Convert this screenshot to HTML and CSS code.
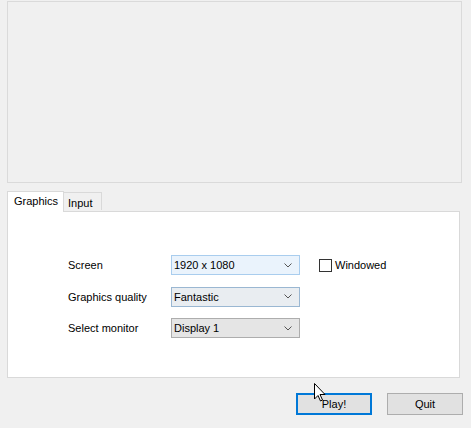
FILE: index.html
```html
<!DOCTYPE html>
<html>
<head>
<meta charset="utf-8">
<link rel="stylesheet" href="styles.css">
</head>
<body>
<div class="app">
  <div class="banner"></div>
  <div class="tabs">
    <div class="tab active">Graphics</div>
    <div class="tab">Input</div>
  </div>
  <div class="panel">
    <div class="form">
      <div class="label">Screen</div>
      <div class="select hover"><span>1920 x 1080</span><svg class="chev" width="8" height="5" viewBox="0 0 8 5"><path d="M0.5 0.5 L4 4 L7.5 0.5" fill="none" stroke="#555" stroke-width="1"/></svg></div>
      <label class="check"><span class="box"></span><span>Windowed</span></label>

      <div class="label">Graphics quality</div>
      <div class="select focus"><span>Fantastic</span><svg class="chev" width="8" height="5" viewBox="0 0 8 5"><path d="M0.5 0.5 L4 4 L7.5 0.5" fill="none" stroke="#555" stroke-width="1"/></svg></div>
      <div></div>

      <div class="label">Select monitor</div>
      <div class="select"><span>Display 1</span><svg class="chev" width="8" height="5" viewBox="0 0 8 5"><path d="M0.5 0.5 L4 4 L7.5 0.5" fill="none" stroke="#555" stroke-width="1"/></svg></div>
      <div></div>
    </div>
  </div>
  <div class="buttons">
    <button class="btn primary">Play!</button>
    <button class="btn">Quit</button>
  </div>
</div>
<svg class="cursor" width="12" height="19" viewBox="0 0 12 19"><path d="M0.5 0.5 L0.5 16 L4 12.5 L6.5 18 L8.5 17 L6 11.5 L11 11.5 Z" fill="#fff" stroke="#000" stroke-width="1"/></svg>
</body>
</html>
```
FILE: styles.css
```css
html, body {
  margin: 0;
  padding: 0;
}
body {
  width: 471px;
  height: 428px;
  background: #f0f0f0;
  font-family: "Liberation Sans", Arial, sans-serif;
  font-size: 11px;
  color: #000;
  overflow: hidden;
  position: relative;
}
.app {
  display: flex;
  flex-direction: column;
  padding: 1px 8px 0 7px;
}
.banner {
  height: 180px;
  border: 1px solid #dadada;
  background: #f0f0f0;
  margin-right: 1px;
}
.tabs {
  display: flex;
  align-items: flex-end;
  margin-top: 8px;
  height: 20px;
  position: relative;
  z-index: 1;
}
.tab {
  box-sizing: border-box;
  height: 18px;
  padding: 0 8px 0 6px;
  border: 1px solid #d9d9d9;
  border-bottom: none;
  background: #f0f0f0;
  line-height: 18px;
  margin-bottom: 1px;
}
.tab.active {
  height: 21px;
  width: 57px;
  background: #fff;
  border-color: #d9d9d9;
  margin-bottom: -1px;
  line-height: 19px;
  padding-left: 6px;
}
.tab:not(.active) {
  width: 38px;
  padding-left: 4px;
  border-left: none;
  padding-top: 1px;
}
.panel {
  box-sizing: border-box;
  height: 167px;
  width: 453px;
  background: #fff;
  border: 1px solid #d9d9d9;
  padding: 43px 0 0 60px;
}
.form {
  display: grid;
  grid-template-columns: 103px 129px auto;
  grid-auto-rows: 20px;
  row-gap: 11.5px;
  align-items: center;
}
.label {
  line-height: 14px;
}
.select {
  box-sizing: border-box;
  height: 20px;
  border: 1px solid #adadad;
  background: #e5e5e5;
  display: flex;
  align-items: center;
  justify-content: space-between;
  padding: 0 7px 0 2px;
}
.select.hover {
  background: #eaf3fc;
  border-color: #a9cdee;
}
.select.focus {
  background: #e9edf1;
  border-color: #9ab7d2;
}
.chev {
  display: block;
}
.check {
  display: flex;
  align-items: center;
  margin-left: 19px;
  gap: 3px;
}
.box {
  box-sizing: border-box;
  width: 13px;
  height: 13px;
  border: 1px solid #333;
  background: #fff;
}
.buttons {
  display: flex;
  justify-content: flex-end;
  gap: 15px;
  margin-top: 15px;
}
.btn {
  box-sizing: border-box;
  width: 76px;
  height: 22px;
  border: 1px solid #adadad;
  background: #e1e1e1;
  font-family: "Liberation Sans", Arial, sans-serif;
  font-size: 11px;
  color: #000;
  padding: 0;
  margin: 0;
}
.btn.primary {
  border: 2px solid #0078d7;
}
.cursor {
  position: absolute;
  left: 314px;
  top: 383px;
}
```
